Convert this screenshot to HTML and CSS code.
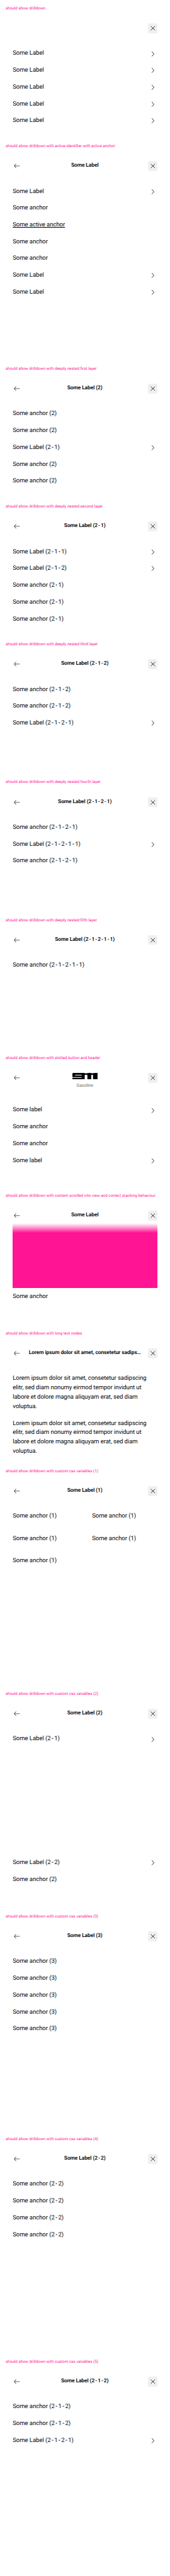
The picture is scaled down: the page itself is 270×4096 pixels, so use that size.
FILE: index.html
```
<!DOCTYPE html>
<html lang="en">
<head>
<meta charset="utf-8">
<title>Drilldown</title>
<link rel="stylesheet" href="styles.css">
</head>
<body>
<svg class="sprite" width="0" height="0">
  <symbol id="back" viewBox="0 0 28 28"><path d="M11.6 8 6.6 14l5 6" stroke-width="1.4"/><path d="M6.6 14H22" stroke-width="1.1"/></symbol>
  <symbol id="close" viewBox="0 0 28 28"><path d="M8 8.2l12 11.6M20 8.2 8 19.8" stroke-width="1.4"/></symbol>
  <symbol id="next" viewBox="0 0 28 28"><path d="M11 7.4l6 6.6-6 6.6" stroke-width="1.5"/></symbol>
</svg>

<section class="case">
  <h2 class="name">should show drilldown</h2>
  <header class="bar"><span class="btn"></span><span class="title"></span><span class="btn close"><svg><use href="#close"/></svg></span></header>
  <div class="list">
    <div class="row">Some Label<svg><use href="#next"/></svg></div>
    <div class="row">Some Label<svg><use href="#next"/></svg></div>
    <div class="row">Some Label<svg><use href="#next"/></svg></div>
    <div class="row">Some Label<svg><use href="#next"/></svg></div>
    <div class="row">Some Label<svg><use href="#next"/></svg></div>
  </div>
</section>

<section class="case tall">
  <h2 class="name">should show drilldown with active-identifier with active anchor</h2>
  <header class="bar"><span class="btn"><svg><use href="#back"/></svg></span><span class="title">Some Label</span><span class="btn close"><svg><use href="#close"/></svg></span></header>
  <div class="list">
    <div class="row">Some Label<svg><use href="#next"/></svg></div>
    <div class="row">Some anchor</div>
    <div class="row"><span class="active">Some active anchor</span></div>
    <div class="row">Some anchor</div>
    <div class="row">Some anchor</div>
    <div class="row">Some Label<svg><use href="#next"/></svg></div>
    <div class="row">Some Label<svg><use href="#next"/></svg></div>
  </div>
</section>

<section class="case">
  <h2 class="name">should show drilldown with deeply nested first layer</h2>
  <header class="bar"><span class="btn"><svg><use href="#back"/></svg></span><span class="title">Some Label (2)</span><span class="btn close"><svg><use href="#close"/></svg></span></header>
  <div class="list">
    <div class="row"><span>Some anchor (2)</span></div>
    <div class="row"><span>Some anchor (2)</span></div>
    <div class="row"><span>Some Label (2<i>-</i>1)</span><svg><use href="#next"/></svg></div>
    <div class="row"><span>Some anchor (2)</span></div>
    <div class="row"><span>Some anchor (2)</span></div>
  </div>
</section>

<section class="case">
  <h2 class="name">should show drilldown with deeply nested second layer</h2>
  <header class="bar"><span class="btn"><svg><use href="#back"/></svg></span><span class="title">Some Label (2<i>-</i>1)</span><span class="btn close"><svg><use href="#close"/></svg></span></header>
  <div class="list">
    <div class="row"><span>Some Label (2<i>-</i>1<i>-</i>1)</span><svg><use href="#next"/></svg></div>
    <div class="row"><span>Some Label (2<i>-</i>1<i>-</i>2)</span><svg><use href="#next"/></svg></div>
    <div class="row"><span>Some anchor (2<i>-</i>1)</span></div>
    <div class="row"><span>Some anchor (2<i>-</i>1)</span></div>
    <div class="row"><span>Some anchor (2<i>-</i>1)</span></div>
  </div>
</section>

<section class="case">
  <h2 class="name">should show drilldown with deeply nested third layer</h2>
  <header class="bar"><span class="btn"><svg><use href="#back"/></svg></span><span class="title">Some Label (2<i>-</i>1<i>-</i>2)</span><span class="btn close"><svg><use href="#close"/></svg></span></header>
  <div class="list">
    <div class="row"><span>Some anchor (2<i>-</i>1<i>-</i>2)</span></div>
    <div class="row"><span>Some anchor (2<i>-</i>1<i>-</i>2)</span></div>
    <div class="row"><span>Some Label (2<i>-</i>1<i>-</i>2<i>-</i>1)</span><svg><use href="#next"/></svg></div>
  </div>
</section>

<section class="case">
  <h2 class="name">should show drilldown with deeply nested fourth layer</h2>
  <header class="bar"><span class="btn"><svg><use href="#back"/></svg></span><span class="title">Some Label (2<i>-</i>1<i>-</i>2<i>-</i>1)</span><span class="btn close"><svg><use href="#close"/></svg></span></header>
  <div class="list">
    <div class="row"><span>Some anchor (2<i>-</i>1<i>-</i>2<i>-</i>1)</span></div>
    <div class="row"><span>Some Label (2<i>-</i>1<i>-</i>2<i>-</i>1<i>-</i>1)</span><svg><use href="#next"/></svg></div>
    <div class="row"><span>Some anchor (2<i>-</i>1<i>-</i>2<i>-</i>1)</span></div>
  </div>
</section>

<section class="case">
  <h2 class="name">should show drilldown with deeply nested fifth layer</h2>
  <header class="bar"><span class="btn"><svg><use href="#back"/></svg></span><span class="title">Some Label (2<i>-</i>1<i>-</i>2<i>-</i>1<i>-</i>1)</span><span class="btn close"><svg><use href="#close"/></svg></span></header>
  <div class="list">
    <div class="row"><span>Some anchor (2<i>-</i>1<i>-</i>2<i>-</i>1<i>-</i>1)</span></div>
  </div>
</section>

<section class="case">
  <h2 class="name">should show drilldown with slotted button and header</h2>
  <header class="bar slotted"><span class="btn"><svg><use href="#back"/></svg></span>
    <div class="model">
      <svg class="logo" viewBox="0 0 71 19" role="img" aria-label="911">
        <rect width="35" height="19" rx="2.2"/><rect y="14" width="20" height="5"/>
        <rect x="34" y=".8" width="37" height="5"/><rect x="42" y="0" width="11.6" height="19"/><rect x="57.5" y="0" width="13.5" height="19"/>
        <g class="gap"><rect x="7.5" y="5.2" width="19" height="2" rx=".6"/><rect y="11.9" width="26" height="1.9"/><rect x="35.2" y="5.8" width="6.6" height="14"/><rect x="53.6" y="5.8" width="4.4" height="14"/></g>
        <path class="slit" d="M35 1.4 45 .1M53.6 1.4 63 .1"/>
      </svg>
      <span class="fuel">Gasoline</span>
    </div>
    <span class="btn close"><svg><use href="#close"/></svg></span></header>
  <div class="list">
    <div class="row">Some label<svg><use href="#next"/></svg></div>
    <div class="row">Some anchor</div>
    <div class="row">Some anchor</div>
    <div class="row">Some label<svg><use href="#next"/></svg></div>
  </div>
</section>

<section class="case">
  <h2 class="name">should show drilldown with content scrolled into view and correct stacking behaviour</h2>
  <header class="bar"><span class="btn"><svg><use href="#back"/></svg></span><span class="title">Some Label</span><span class="btn close"><svg><use href="#close"/></svg></span></header>
  <div class="list scrolled">
    <div class="block"></div>
    <div class="row">Some anchor</div>
  </div>
</section>

<section class="case">
  <h2 class="name">should show drilldown with long text nodes</h2>
  <header class="bar"><span class="btn"><svg><use href="#back"/></svg></span><span class="title">Lorem ipsum dolor sit amet, consetetur sadips…</span><span class="btn close"><svg><use href="#close"/></svg></span></header>
  <div class="list">
    <p class="text">Lorem ipsum dolor sit amet, consetetur sadipscing<br>elitr, sed diam nonumy eirmod tempor invidunt ut<br>labore et dolore magna aliquyam erat, sed diam<br>voluptua.</p>
    <p class="text">Lorem ipsum dolor sit amet, consetetur sadipscing<br>elitr, sed diam nonumy eirmod tempor invidunt ut<br>labore et dolore magna aliquyam erat, sed diam<br>voluptua.</p>
  </div>
</section>

<section class="case tall">
  <h2 class="name">should show drilldown with custom css variables (1)</h2>
  <header class="bar"><span class="btn"><svg><use href="#back"/></svg></span><span class="title">Some Label (1)</span><span class="btn close"><svg><use href="#close"/></svg></span></header>
  <div class="list columns">
    <div class="row"><span>Some anchor (1)</span></div>
    <div class="row"><span>Some anchor (1)</span></div>
    <div class="row"><span>Some anchor (1)</span></div>
    <div class="row"><span>Some anchor (1)</span></div>
    <div class="row"><span>Some anchor (1)</span></div>
  </div>
</section>

<section class="case tall">
  <h2 class="name">should show drilldown with custom css variables (2)</h2>
  <header class="bar"><span class="btn"><svg><use href="#back"/></svg></span><span class="title">Some Label (2)</span><span class="btn close"><svg><use href="#close"/></svg></span></header>
  <div class="list">
    <div class="row spaced"><span>Some Label (2<i>-</i>1)</span><svg><use href="#next"/></svg></div>
    <div class="row"><span>Some Label (2<i>-</i>2)</span><svg><use href="#next"/></svg></div>
    <div class="row"><span>Some anchor (2)</span></div>
  </div>
</section>

<section class="case tall">
  <h2 class="name">should show drilldown with custom css variables (3)</h2>
  <header class="bar"><span class="btn"><svg><use href="#back"/></svg></span><span class="title">Some Label (3)</span><span class="btn close"><svg><use href="#close"/></svg></span></header>
  <div class="list">
    <div class="row"><span>Some anchor (3)</span></div>
    <div class="row"><span>Some anchor (3)</span></div>
    <div class="row"><span>Some anchor (3)</span></div>
    <div class="row"><span>Some anchor (3)</span></div>
    <div class="row"><span>Some anchor (3)</span></div>
  </div>
</section>

<section class="case tall">
  <h2 class="name">should show drilldown with custom css variables (4)</h2>
  <header class="bar"><span class="btn"><svg><use href="#back"/></svg></span><span class="title">Some Label (2<i>-</i>2)</span><span class="btn close"><svg><use href="#close"/></svg></span></header>
  <div class="list">
    <div class="row"><span>Some anchor (2<i>-</i>2)</span></div>
    <div class="row"><span>Some anchor (2<i>-</i>2)</span></div>
    <div class="row"><span>Some anchor (2<i>-</i>2)</span></div>
    <div class="row"><span>Some anchor (2<i>-</i>2)</span></div>
  </div>
</section>

<section class="case tall">
  <h2 class="name">should show drilldown with custom css variables (5)</h2>
  <header class="bar"><span class="btn"><svg><use href="#back"/></svg></span><span class="title">Some Label (2<i>-</i>1<i>-</i>2)</span><span class="btn close"><svg><use href="#close"/></svg></span></header>
  <div class="list">
    <div class="row"><span>Some anchor (2<i>-</i>1<i>-</i>2)</span></div>
    <div class="row"><span>Some anchor (2<i>-</i>1<i>-</i>2)</span></div>
    <div class="row"><span>Some Label (2<i>-</i>1<i>-</i>2<i>-</i>1)</span><svg><use href="#next"/></svg></div>
  </div>
</section>
</body>
</html>
```
FILE: styles.css
```
html {
  font-size: 5.6186px;
  background: #fff;
}

body {
  margin: 0;
  font-family: Roboto, "Liberation Sans", sans-serif;
  color: #010205;
  text-rendering: geometricPrecision;
}

* {
  box-sizing: border-box;
}

.sprite {
  display: block;
  height: 0;
}

svg {
  flex: none;
  width: 2.8rem;
  height: 2.8rem;
  fill: none;
  stroke: #010205;
}

i {
  font-style: normal;
  font-weight: 500;
  margin: 0 .13em;
}

.case {
  display: flex;
  flex-direction: column;
  height: 39rem;
  padding-top: 1.6rem;
  overflow: hidden;
}

.tall {
  height: 63rem;
}

.name {
  margin: 0 0 3.4rem 1.6rem;
  font-size: 1.13rem;
  font-weight: 400;
  line-height: 1.6rem;
  white-space: nowrap;
  color: #ff1493;
}

.bar {
  display: flex;
  flex: none;
  height: 2.8rem;
  margin: 0 3.5rem 4.56rem 3.4rem;
}

.btn {
  display: flex;
  width: 2.8rem;
  height: 2.8rem;
  border-radius: .4rem;
}

.close {
  background: #f0f0f1;
}

.title {
  flex: 1;
  font-size: 1.5rem;
  font-weight: 600;
  line-height: 2.8rem;
  letter-spacing: -.013rem;
  text-align: center;
  white-space: nowrap;
}

.slotted {
  height: 4.8rem;
}

.model {
  display: flex;
  flex: 1;
  flex-direction: column;
  align-items: center;
}

.logo {
  width: 7.1rem;
  height: 1.9rem;
  fill: #010205;
  stroke: none;
}

.gap {
  fill: #fff;
}

.slit {
  fill: none;
  stroke: #fff;
  stroke-width: .6;
}

.fuel {
  margin-top: 1rem;
  font-size: 1.23rem;
  line-height: 1.7rem;
  letter-spacing: -.01rem;
  color: #6b6d70;
}

.list {
  display: grid;
  gap: 2.12rem;
  padding: 0 3.6rem;
  font-size: 1.7rem;
  line-height: 2.64rem;
  letter-spacing: -.01rem;
}

.row {
  display: flex;
  align-items: center;
  justify-content: space-between;
  height: 2.64rem;
  white-space: nowrap;
}

.row svg {
  margin: -.15rem -.1rem 0 0;
}

.active {
  text-decoration: underline;
  text-decoration-thickness: 1px;
  text-underline-offset: .2rem;
  text-decoration-skip-ink: none;
}

.text {
  margin: 0;
  white-space: nowrap;
}

.scrolled {
  gap: 1.22rem;
  margin-top: -3.71rem;
}

.block {
  height: 18.25rem;
  background: linear-gradient(#fff, #ff1493 2.75rem);
}

.columns {
  grid-template-columns: 1fr 1fr;
  gap: 3.67rem 4rem;
}

.spaced {
  margin-bottom: 30.25rem;
}
```
